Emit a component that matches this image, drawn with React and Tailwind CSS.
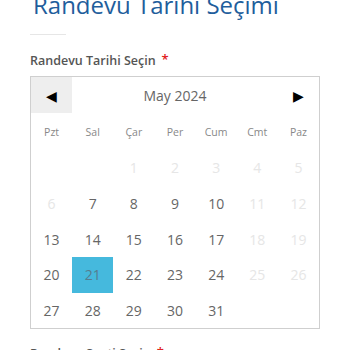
export default function App() {
  const font = { fontFamily: '"Open Sans", "Liberation Sans", sans-serif' };
  const days = ["Pzt", "Sal", "Çar", "Per", "Cum", "Cmt", "Paz"];
  const cells = [
    [null, null, [1, 0], [2, 0], [3, 0], [4, 0], [5, 0]],
    [[6, 0], [7, 1], [8, 1], [9, 1], [10, 1], [11, 0], [12, 0]],
    [[13, 1], [14, 1], [15, 1], [16, 1], [17, 1], [18, 0], [19, 0]],
    [[20, 1], [21, 2], [22, 1], [23, 1], [24, 1], [25, 0], [26, 0]],
    [[27, 1], [28, 1], [29, 1], [30, 1], [31, 1], null, null],
  ];
  return (
    <div className="w-[350px] h-[350px] overflow-hidden bg-white" style={font}>
      <div className="pl-[30px] pr-[30px]">
        <div className="h-[20px] relative">
          <div className="absolute left-[3px] top-[-10px] text-[24px] leading-[30px] text-[#1f5e9c] whitespace-nowrap">
            Randevu Tarihi Seçimi
          </div>
        </div>
        <div className="mt-[14px] w-[36px] h-px bg-[#e6e6e6]"></div>
        <div className="mt-[17px] flex items-start text-[12.5px] font-semibold text-[#555] leading-[18px]">
          Randevu Tarihi Seçin
          <span className="ml-[6px] text-[#e02020] text-[13px] leading-[14px]">*</span>
        </div>
        <div className="mt-[6px] w-[290px] border border-[#cfcfcf]">
          <div className="flex items-center h-[36px]">
            <div className="w-[41px] h-full bg-[#eeeeee] flex items-center justify-center text-[14px] text-black">◀</div>
            <div className="flex-1 text-center text-[14px] text-[#666]">May 2024</div>
            <div className="w-[41px] h-full flex items-center justify-center text-[14px] text-black">▶</div>
          </div>
          <div className="grid grid-cols-7 h-[37px] items-center">
            {days.map((d) => (
              <div key={d} className="text-center text-[10.5px] text-[#888] pt-[2px]">{d}</div>
            ))}
          </div>
          {cells.map((row, i) => (
            <div key={i} className="grid grid-cols-7 h-[35.7px]">
              {row.map((c, j) => (
                <div
                  key={j}
                  className={
                    "flex items-center justify-center text-[14px] " +
                    (c && c[1] === 2 ? "bg-[#45b9dd] text-[#557d8f] text-[13px]" : c && c[1] === 1 ? "text-[#666]" : "text-[#e6e6e6]")
                  }
                >
                  {c ? c[0] : ""}
                </div>
              ))}
            </div>
          ))}
        </div>
        <div className="mt-[16px] flex items-start text-[12.5px] font-semibold text-[#555] leading-[18px]">
          Randevu Saati Seçin
          <span className="ml-[6px] text-[#e02020] text-[13px] leading-[14px]">*</span>
        </div>
      </div>
    </div>
  );
}
